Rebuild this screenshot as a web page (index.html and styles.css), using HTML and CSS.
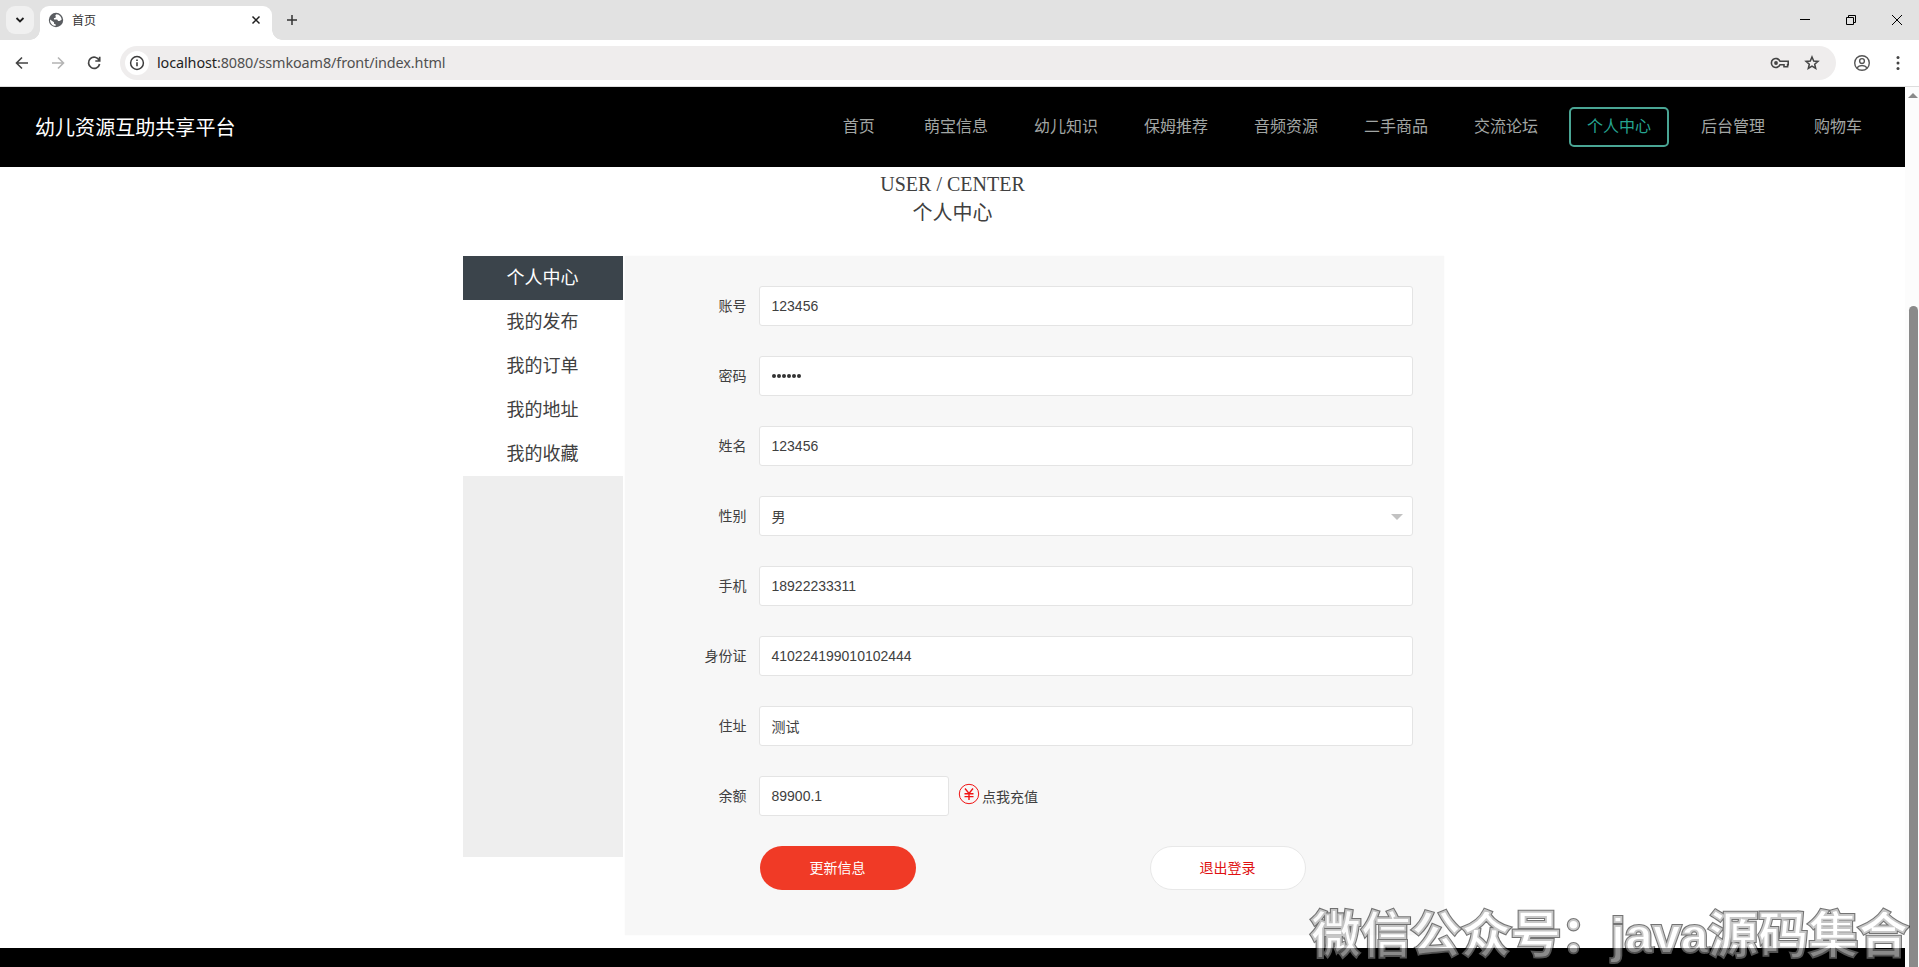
FILE: index.html
```html
<!DOCTYPE html>
<html lang="zh-CN">
<head>
<meta charset="utf-8">
<title>首页</title>
<link rel="stylesheet" href="styles.css">
</head>
<body>
<div class="window">
  <div class="tabstrip">
    <div class="tab-search"><svg width="10" height="10" viewBox="0 0 10 10"><path d="M1.500 3l3.500 3.500L8.500 3" fill="none" stroke="#1f1f1f" stroke-width="1.800"/></svg></div>
    <div class="tab">
      <svg class="globe" width="16" height="16" viewBox="0 0 16 16"><circle cx="8" cy="8" r="7.200" fill="#5a5d61"/><path d="M8.500 2.200c-1 .6-1.500 1.300-.8 2.200.6.8-.4 1.400-1.400 1.600-.6.2-.4 1-.2 1.400h2.600c1 0 1.200.8 1.200 1.600h1.700l2-1.200c.2-2.600-2-5.400-5.100-5.600zM2 7.600l4 2.600v1.600l1.600.4v1.900C4.500 14 1.800 11.300 2 7.600z" fill="#fff"/></svg>
      <span class="tab-title">首页</span>
      <svg class="tab-close" width="10" height="10" viewBox="0 0 10 10"><path d="M1.500 1.500l7 7M8.500 1.500l-7 7" stroke="#1f1f1f" stroke-width="1.500"/></svg>
    </div>
    <svg class="newtab" width="12" height="12" viewBox="0 0 12 12"><path d="M6 1v10M1 6h10" stroke="#333" stroke-width="1.500"/></svg>
    <div class="controls">
      <svg width="12" height="12" viewBox="0 0 12 12"><path d="M1 5.500h10" stroke="#000"/></svg>
      <svg width="12" height="12" viewBox="0 0 12 12"><path d="M1.500 3.500h7v7h-7zM3.500 3.500v-2h7v7h-2" fill="none" stroke="#000"/></svg>
      <svg width="12" height="12" viewBox="0 0 12 12"><path d="M1 1l10 10M11 1L1 11" stroke="#000"/></svg>
    </div>
  </div>
  <div class="toolbar">
    <svg width="16" height="16" viewBox="0 0 16 16"><path d="M14 8H3M8 2.500L2.500 8 8 13.500" fill="none" stroke="#444" stroke-width="1.600"/></svg>
    <svg width="16" height="16" viewBox="0 0 16 16"><path d="M2 8h11M8 2.500L13.500 8 8 13.500" fill="none" stroke="#b4b4b4" stroke-width="1.600"/></svg>
    <svg width="16" height="16" viewBox="0 0 16 16"><path d="M13.200 5.400A5.600 5.600 0 1 0 13.600 9M13.700 1.800V6H9.300" fill="none" stroke="#444" stroke-width="1.700"/></svg>
    <div class="omnibox">
      <span class="info"><svg width="16" height="16" viewBox="0 0 16 16"><circle cx="8" cy="8" r="6.400" fill="none" stroke="#3c3c3c" stroke-width="1.500"/><path d="M8 7.200v4M8 4.400v1.700" stroke="#3c3c3c" stroke-width="1.600"/></svg></span>
      <span class="url"><b>localhost</b>:8080/ssmkoam8/front/index.html</span>
      <svg class="key" width="20" height="12" viewBox="0 0 20 12"><path d="M10 4.200A4.500 4.500 0 1 0 10 7.800h4v2h3.600V7.800h.6V4.200z" fill="none" stroke="#444" stroke-width="1.600"/><circle cx="6" cy="6" r="1.900" fill="#444"/></svg>
      <svg class="star" width="16" height="16" viewBox="0 0 16 16"><path d="M8 2l1.700 4 4.300.4-3.300 2.800 1 4.300L8 11.200l-3.700 2.300 1-4.300L2 6.400 6.300 6z" fill="none" stroke="#444" stroke-width="1.500"/></svg>
    </div>
    <svg class="avatar" width="18" height="18" viewBox="0 0 18 18"><circle cx="9" cy="9" r="7.300" fill="none" stroke="#555" stroke-width="1.400"/><circle cx="9" cy="7" r="2.400" fill="none" stroke="#555" stroke-width="1.400"/><path d="M3.800 14c1.300-1.700 3-2.500 5.200-2.500s3.900.8 5.200 2.500" fill="none" stroke="#555" stroke-width="1.400"/></svg>
    <svg class="dots" width="4" height="16" viewBox="0 0 4 16"><g fill="#444"><circle cx="2" cy="2.500" r="1.500"/><circle cx="2" cy="8" r="1.500"/><circle cx="2" cy="13.500" r="1.500"/></g></svg>
  </div>
  <div class="viewport">
    <div class="page">
      <header class="header">
        <span class="brand">幼儿资源互助共享平台</span>
        <nav class="nav">
          <a class="wide">首页</a><a>萌宝信息</a><a>幼儿知识</a><a>保姆推荐</a><a>音频资源</a><a>二手商品</a><a>交流论坛</a><a class="active">个人中心</a><a class="wide">后台管理</a><a>购物车</a>
        </nav>
      </header>
      <div class="heading"><div class="en">USER / CENTER</div><div class="zh">个人中心</div></div>
      <main class="center">
        <aside class="side">
          <a class="on">个人中心</a><a>我的发布</a><a>我的订单</a><a>我的地址</a><a>我的收藏</a>
        </aside>
        <section class="form">
          <div class="row"><label>账号</label><div class="input">123456</div></div>
          <div class="row"><label>密码</label><div class="input pw"><i></i><i></i><i></i><i></i><i></i><i></i></div></div>
          <div class="row"><label>姓名</label><div class="input">123456</div></div>
          <div class="row"><label>性别</label><div class="input select cn">男</div></div>
          <div class="row"><label>手机</label><div class="input">18922233311</div></div>
          <div class="row"><label>身份证</label><div class="input">410224199010102444</div></div>
          <div class="row"><label>住址</label><div class="input cn">测试</div></div>
          <div class="row"><label>余额</label><div class="input short">89900.1</div>
            <svg class="yen" width="22" height="22" viewBox="0 0 22 22"><g fill="none" stroke="#f01414"><circle cx="11" cy="11" r="9.700" stroke-width="1"/><path d="M7 5.500l4 5 4-5M11 10.500v6.500M6.500 10.800h9M6.500 13.600h9" stroke-width="1.400"/></g></svg>
            <span class="recharge">点我充值</span></div>
          <div class="buttons"><a class="btn primary">更新信息</a><a class="btn plain">退出登录</a></div>
        </section>
      </main>
      <footer class="footer"></footer>
    </div>
    <div class="scrollbar"><div class="up"></div><div class="thumb"></div></div>
  </div>
  <div class="watermark" data-text="微信公众号：java源码集合">微信公众号：java源码集合</div>
</div>
</body>
</html>
```
FILE: styles.css
```css
* { box-sizing: border-box; }
body { margin: 0; font-family: "Liberation Sans", "Noto Sans CJK SC", sans-serif; font-weight: 400; color: #404040; }
svg { display: block; flex: none; }
.window { width: 1919px; height: 967px; display: flex; flex-direction: column; overflow: hidden; position: relative; background: #fff; }

.tabstrip { height: 40px; flex: none; background: #e2e2e2; display: flex; align-items: center; }
.tab-search { width: 28px; height: 28px; margin-left: 6px; border-radius: 9px; background: #f0f0f0; display: flex; align-items: center; justify-content: center; }
.tab { position: relative; margin: 6px 0 0 6px; width: 232px; height: 34px; padding: 0 11px 6px 8px; border-radius: 9px 9px 0 0; background: #fff; display: flex; align-items: center; }
.tab::before, .tab::after { content: ""; position: absolute; bottom: 0; width: 10px; height: 10px; }
.tab::before { left: -10px; background: radial-gradient(circle at 0 0, transparent 9.5px, #fff 10px); }
.tab::after { right: -10px; background: radial-gradient(circle at 100% 0, transparent 9.5px, #fff 10px); }
.tab-title { font-size: 12px; margin-left: 8px; padding-bottom: 1px; color: #333; }
.tab-close { margin-left: auto; }
.newtab { margin-left: 14px; }
.controls { margin: 0 16px 0 auto; display: flex; gap: 34px; }

.toolbar { height: 47px; flex: none; background: #fff; border-bottom: 1px solid #ddd; display: flex; align-items: center; padding: 0 19px 0 14px; }
.toolbar > svg + svg { margin-left: 20px; }
.omnibox { flex: 1; height: 34px; margin-left: 18px; padding: 0 16px 0 5px; border-radius: 17px; background: #efeded; display: flex; align-items: center; }
.info { width: 24px; height: 24px; border-radius: 12px; background: #fff; display: flex; align-items: center; justify-content: center; }
.url { flex: 1; margin-left: 8px; font: 400 14.4px "Noto Sans", sans-serif; letter-spacing: -.1px; color: #505050; padding-bottom: 1px; }
.url b { font-weight: 400; color: #1f1f1f; }
.star { margin-left: 14px; }
.avatar { margin-left: 17px; }
.toolbar > .dots { margin-left: 25px; }

.viewport { flex: 1; display: flex; min-height: 0; }
.page { width: 1905px; display: flex; flex-direction: column; }
.header { height: 80px; flex: none; background: #000; display: flex; align-items: center; justify-content: space-between; padding: 0 43px 0 35px; }
.brand { font-size: 20px; letter-spacing: .05px; color: #fff; padding-bottom: 2px; }
.nav { display: flex; align-items: center; gap: 46px; font-size: 16px; line-height: 36px; color: #a2a6a4; }
.nav .wide { margin-right: 3px; }
.nav .active { width: 100px; text-align: center; border: 2px solid #4aa594; border-radius: 5px; color: #26a592; margin: 0 -15px 0 -15px; }
.nav .active + a { margin-left: 1px; }
.heading { height: 89px; padding-top: 5px; text-align: center; font-size: 20px; line-height: 33px; }
.heading .en { font-family: "Liberation Serif", serif; line-height: 25px; }
.center { height: 692px; width: 981px; margin-left: 463px; display: flex; align-items: flex-start; }
.side { width: 160px; height: 601px; background: #eee; display: flex; flex-direction: column; font-size: 18px; line-height: 44px; text-align: center; }
.side a { background: #fff; padding-right: 1px; }
.side .on { background: #3b444b; color: #fff; }
.form { margin-left: 2px; width: 819px; height: 679px; background: #f7f7f7; box-shadow: 0 0 2px #f7f7f7; padding: 30px 31px 0 0; font-size: 14px; }
.row { height: 40px; margin-bottom: 30px; display: flex; align-items: center; }
.row label { width: 121.5px; margin-right: 12.5px; padding-bottom: 2px; text-align: right; }
.input { flex: 1; height: 40px; padding-left: 11.5px; border: 1px solid #e4e4e4; border-radius: 3px; background: #fff; line-height: 38px; position: relative; }
.input.cn { line-height: 40px; }
.input.short { flex: none; width: 190px; }
.pw { display: flex; align-items: center; gap: 1px; }
.pw i { width: 4px; height: 4px; border-radius: 2px; background: #333; }
.select::after { content: ""; position: absolute; right: 9px; top: 17px; border: 6px solid transparent; border-top-color: #c2c2c2; border-bottom: 0; }
.yen { margin: -4px 0 0 8.5px; }
.recharge { margin-left: 2.5px; }
.buttons { display: flex; padding-left: 135px; gap: 234px; }
.btn { width: 156px; height: 44px; border-radius: 22px; line-height: 44px; text-align: center; padding-right: 1px; }
.primary { background: #f03a26; color: #fff; }
.plain { background: #fff; border: 1px solid #e8e8e8; line-height: 42px; color: #e01010; }
.footer { flex: 1; background: #000; }
.scrollbar { width: 14px; background: #fcfcfc; padding-top: 6px; display: flex; flex-direction: column; align-items: center; }
.up { border: 5px solid transparent; border-top: 0; border-bottom-color: #8a8a8a; margin-left: 1px; }
.thumb { width: 9px; flex: 1; margin: 208px 0 0 3px; border-radius: 5px 5px 0 0; background: #8a8a8a; }

.watermark { position: absolute; left: 1311px; top: 899px; font-weight: 700; font-size: 50px; line-height: 74px; white-space: nowrap; color: #000; -webkit-text-stroke: 4px #000; opacity: .54; }
.watermark::before { content: attr(data-text); position: absolute; left: 0; top: 0; color: #fff; -webkit-text-stroke: 1.8px #999; }
```
